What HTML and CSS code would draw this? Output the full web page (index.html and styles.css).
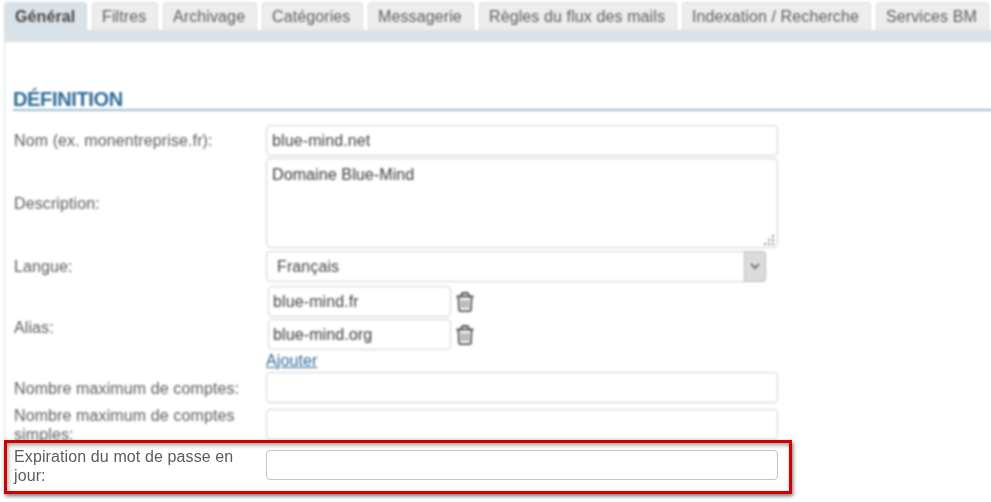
FILE: index.html
```html
<!DOCTYPE html>
<html lang="fr">
<head>
<meta charset="utf-8">
<title>Domaine</title>
<link rel="stylesheet" href="styles.css">
</head>
<body>
<div class="viewport">
  <div class="soft">
    <nav class="tabs">
      <a class="tab active w-general">Général</a>
      <a class="tab w-filtres">Filtres</a>
      <a class="tab w-archivage">Archivage</a>
      <a class="tab w-categories">Catégories</a>
      <a class="tab w-messagerie">Messagerie</a>
      <a class="tab w-regles">Règles du flux des mails</a>
      <a class="tab w-indexation">Indexation / Recherche</a>
      <a class="tab w-services">Services BM</a>
    </nav>
    <div class="band"></div>
    <main class="panel">
      <h2>DÉFINITION</h2>
      <div class="row name">
        <label>Nom (ex. monentreprise.fr):</label>
        <div class="field">blue-mind.net</div>
      </div>
      <div class="row description">
        <label>Description:</label>
        <div class="field area">Domaine Blue-Mind
          <svg class="grip" viewBox="0 0 12 12" width="12" height="12"><path d="M9 1h2v2H9zM9 5h2v2H9zM9 9h2v2H9zM5 5h2v2H5zM5 9h2v2H5zM1 9h2v2H1z"/></svg>
        </div>
      </div>
      <div class="row language">
        <label>Langue:</label>
        <div class="field select"><span>Français</span>
          <div class="arrow"><svg viewBox="0 0 10 7" width="10" height="7"><path d="M1 1l4 4 4-4"/></svg></div>
        </div>
      </div>
      <div class="row alias">
        <label>Alias:</label>
        <div class="aliases">
          <div class="alias-line"><div class="field short">blue-mind.fr</div>
            <svg class="trash" viewBox="0 0 18 22" width="18" height="22"><path d="M5 4.5L6.5 2h5L13 4.5M.5 5.5h17M2.5 6l.6 13q.1 1.2 1.3 1.2h9.2q1.200 0 1.300-1.200l.6-13"/><path class="bars" d="M6.200 9v8M9 9v8M11.800 9v8"/></svg></div>
          <div class="alias-line"><div class="field short">blue-mind.org</div>
            <svg class="trash" viewBox="0 0 18 22" width="18" height="22"><path d="M5 4.5L6.5 2h5L13 4.5M.5 5.5h17M2.5 6l.6 13q.1 1.2 1.3 1.2h9.2q1.200 0 1.300-1.200l.6-13"/><path class="bars" d="M6.200 9v8M9 9v8M11.800 9v8"/></svg></div>
          <a class="add">Ajouter</a>
        </div>
      </div>
      <div class="row accounts">
        <label>Nombre maximum de comptes:</label>
        <div class="field"></div>
      </div>
      <div class="row simple">
        <label>Nombre maximum de comptes simples:</label>
        <div class="field"></div>
      </div>
    </main>
  </div>
</div>
<section class="highlight">
  <label>Expiration du mot de passe en jour:</label>
  <div class="field"></div>
</section>
</body>
</html>
```
FILE: styles.css
```css
* { box-sizing: border-box; }
body {
  margin: 0;
  height: 502px;
  overflow: hidden;
  background: #fff;
  color: #5c5c5c;
  font: 16px/19px "Liberation Sans", Arial, sans-serif;
  letter-spacing: 0.11px;
}
.viewport { height: 440px; overflow: hidden; }
.soft { width: 1011px; height: 460px; padding: 2px 0 0 4px; filter: blur(0.9px); }
.tabs { display: flex; gap: 5px; height: 28px; }
.tab {
  flex: none;
  height: 28px;
  padding-left: 9px;
  line-height: 27px;
  white-space: nowrap;
  background: #ededed;
  border: 1px solid #dfdfdf;
  border-bottom: 0;
  border-radius: 4px 4px 0 0;
}
.active { padding-left: 10px; background: #d9e2e8; border-color: #d0dce3; color: #444; font-weight: bold; }
.w-general { width: 83px; }
.w-filtres { width: 66px; }
.w-archivage { width: 94px; }
.w-categories { width: 101px; }
.w-messagerie { width: 106px; }
.w-regles { width: 198px; }
.w-indexation { width: 189px; }
.w-services { width: 113px; }
.band { height: 12px; background: #d9e2e8; }
.panel { height: 418px; padding: 46px 0 0 8px; border-left: 1px solid #d9e2e8; }
h2 {
  margin: 0;
  height: 23px;
  font-size: 20px;
  line-height: 22px;
  letter-spacing: -0.35px;
  color: #2c6a98;
  border-bottom: 2px solid #9dbdd3;
}
.row { display: flex; align-items: center; }
label { flex: none; width: 252px; padding-right: 20px; margin-left: 1px; }
.field {
  width: 512px;
  height: 31px;
  padding: 0 5px;
  line-height: 29px;
  border: 1px solid #d2d2d2;
  border-radius: 4px;
  background: #fff;
  color: #444;
}
.name { height: 31px; margin-top: 14px; }
.description { height: 90px; margin-top: 2px; }
.area { position: relative; height: 90px; line-height: 19px; padding-top: 6px; }
.grip { position: absolute; right: 2px; bottom: 1px; fill: #888; }
.language { height: 31px; margin-top: 3px; }
.select { display: flex; justify-content: space-between; width: 500px; padding: 0 0 0 10px; }
.arrow {
  display: flex;
  align-items: center;
  justify-content: center;
  width: 22px;
  height: 31px;
  margin: -1px -1px 0 0;
  background: #dcdcdc;
  border: 1px solid #bbb;
  border-radius: 0 4px 4px 0;
}
.arrow path { fill: none; stroke: #777; stroke-width: 2; }
.alias { height: 86px; margin-top: 4px; }
.alias label { padding-bottom: 4px; }
.aliases { align-self: flex-start; }
.alias-line { display: flex; align-items: center; gap: 5px; height: 31px; margin: 0 0 2px 2px; }
.short { width: 183px; padding-left: 4px; }
.trash { fill: none; stroke: #505050; stroke-width: 1.8; }
.trash .bars { stroke: #777; stroke-width: 1.4; }
.add { display: block; margin-top: -1px; color: #2c6a98; text-decoration: underline; }
.accounts { height: 31px; }
.accounts label { padding-top: 1px; }
.simple { height: 38px; margin-top: 3px; }
.simple .field { margin-top: -1px; }
.highlight {
  display: flex;
  width: 788px;
  height: 54px;
  margin-left: 4px;
  position: relative;
  border: 3px solid #cf0000;
  background: #fff;
  box-shadow: 1px 2px 4px rgba(0,0,0,.55), inset 1px 2px 4px rgba(0,0,0,.4);
}
.highlight label { margin: 4px 0 0 7px; }
.highlight .field { height: 30px; margin-top: 7px; border-color: #c4c4c4; }
```
